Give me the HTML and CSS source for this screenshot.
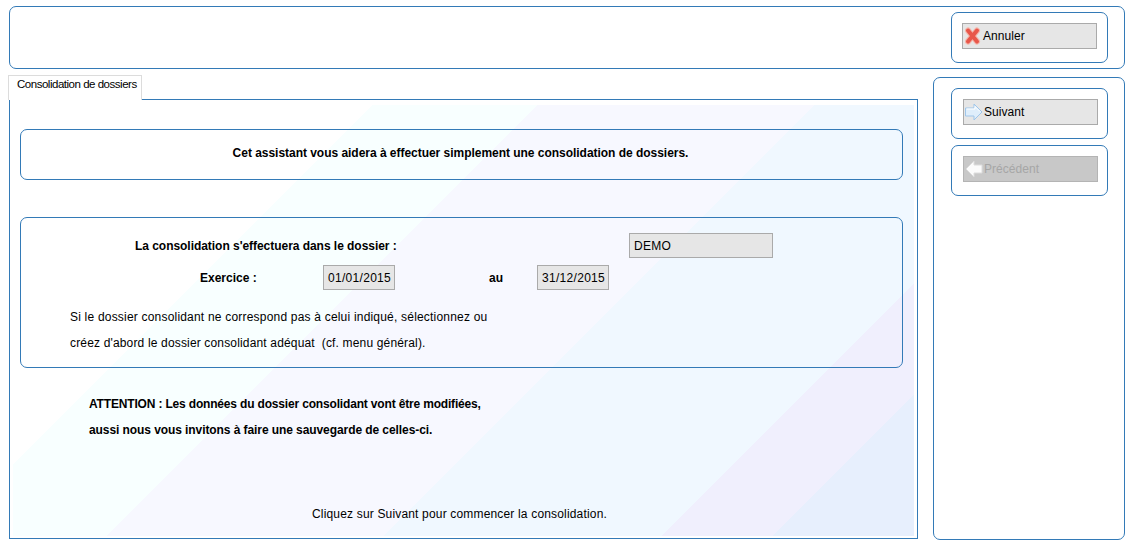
FILE: index.html
```html
<!DOCTYPE html>
<html lang="fr">
<head>
  <meta charset="UTF-8" />
  <title>Consolidation de dossiers</title>
  <link rel="stylesheet" href="styles.css">
</head>
<body>

  <div class="top-frame">
    <div class="btn-box">
      <button class="btn" type="button">
        <svg class="icon" viewBox="0 0 16 18" width="16" height="18">
          <path d="M3 3.5 L12 14.5 M12 3.5 L3 14.5" fill="none" stroke="#f4b5aa" stroke-width="6" stroke-linecap="round"/>
          <path d="M3 3.5 L12 14.5 M12 3.5 L3 14.5" fill="none" stroke="#e8574a" stroke-width="4" stroke-linecap="round"/>
        </svg>
        <span>Annuler</span>
      </button>
    </div>
  </div>

  <div class="main">
    <div class="left">
      <div class="tab">Consolidation de dossiers</div>
      <div class="panel">
        <div class="panel-bg">
          <div class="box intro">Cet assistant vous aidera à effectuer simplement une consolidation de dossiers.</div>

          <div class="box form">
            <div class="row">
              <div class="label label-dossier">La consolidation s'effectuera dans le dossier :</div>
              <div class="field field-wide">DEMO</div>
            </div>
            <div class="row row-dates">
              <div class="label label-exercice">Exercice :</div>
              <div class="field">01/01/2015</div>
              <div class="label label-au">au</div>
              <div class="field">31/12/2015</div>
            </div>
            <p class="note">Si le dossier consolidant ne correspond pas à celui indiqué, sélectionnez ou<br><span class="note-second">créez d'abord le dossier consolidant adéquat&nbsp; (cf. menu général).</span></p>
          </div>

          <p class="warning"><span class="warning-first">ATTENTION : Les données du dossier consolidant vont être modifiées,</span><br>aussi nous vous invitons à faire une sauvegarde de celles-ci.</p>

          <p class="hint">Cliquez sur Suivant pour commencer la consolidation.</p>
        </div>
      </div>
    </div>

    <div class="side">
      <div class="btn-box">
        <button class="btn" type="button">
          <svg class="icon icon-arrow" viewBox="0 0 18 18" width="18" height="18">
            <path d="M.5 5 H9 V1 L17 9 L9 17 V13 H.5 Z" fill="#dfeefb" stroke="#9fc6ea" stroke-width="1"/>
            <path d="M1.5 6 H10 V3.5 L15 8.5" fill="none" stroke="#ffffff" stroke-width="1"/>
          </svg>
          <span>Suivant</span>
        </button>
      </div>
      <div class="btn-box">
        <button class="btn btn-off" type="button">
          <svg class="icon icon-arrow" viewBox="0 0 18 18" width="18" height="18">
            <path d="M17 5 H9 V1 L1 9 L9 17 V13 H17 Z" fill="#fbfbfb" stroke="#dcdcdc" stroke-width="1"/>
          </svg>
          <span>Précédent</span>
        </button>
      </div>
    </div>
  </div>

</body>
</html>
```

FILE: styles.css
```css
body {
  font-family: 'Liberation Sans', Arial, sans-serif;
  font-size: 12px;
  margin: 0;
  padding: 0;
  background: #fff;
  color: #000;
  overflow: hidden;
}

p {
  margin: 0;
}

.top-frame {
  display: flex;
  justify-content: flex-end;
  box-sizing: border-box;
  width: 1116px;
  height: 63px;
  margin: 6px 0 0 9px;
  padding: 5px 16px 0 0;
  border: 1px solid #337ab7;
  border-radius: 7px;
}

.btn-box {
  box-sizing: border-box;
  width: 157px;
  height: 51px;
  padding: 10px 0 0 10px;
  border: 1px solid #337ab7;
  border-radius: 7px;
}

.btn {
  display: flex;
  align-items: center;
  box-sizing: border-box;
  width: 135px;
  height: 26px;
  padding: 0 0 0 2px;
  background: #e6e6e6;
  border: 1px solid #aaa;
  border-radius: 0;
  font: inherit;
  letter-spacing: 0.05px;
  color: #000;
}

.icon {
  flex: none;
  margin-right: 2px;
}

.side .btn-box {
  padding-left: 11px;
}

.side .btn {
  padding-left: 1px;
}

.icon-arrow {
  margin-right: 1px;
}

.btn-off {
  background: #c8c8c8;
  border-color: #b4b4b4;
  color: #a6a6a6;
}

.main {
  display: flex;
  margin-top: 6px;
}

.left {
  width: 910px;
  margin-left: 8px;
}

.tab {
  box-sizing: border-box;
  width: 134px;
  height: 25px;
  margin-bottom: -1px;
  position: relative;
  padding: 2px 0 0 8px;
  background: #fff;
  border: 1px solid #dcdcdc;
  border-bottom: none;
  font-size: 11.5px;
  letter-spacing: -0.48px;
  white-space: nowrap;
}

.panel {
  box-sizing: border-box;
  width: 909px;
  height: 440px;
  margin-left: 1px;
  padding: 5px 3px 2px 3px;
  border: 1px solid #337ab7;
}

.panel-bg {
  box-sizing: border-box;
  height: 100%;
  padding: 24px 11px 0 7px;
  background: linear-gradient(135deg,
    #fff 254px, #f8ffff 254px,
    #f8ffff 371px, #f7f8ff 371px,
    #f7f8ff 567px, #f0f8ff 567px,
    #f0f8ff 763px, #f0effd 763px,
    #f0effd 842px, #e7effd 842px);
}

.box {
  box-sizing: border-box;
  border: 1px solid #337ab7;
  border-radius: 7px;
}

.intro {
  height: 51px;
  padding: 16px 2px 0 0;
  font-weight: bold;
  letter-spacing: -0.03px;
  text-align: center;
}

.form {
  height: 151px;
  margin-top: 37px;
  padding-top: 15px;
}

.row {
  display: flex;
  align-items: center;
}

.row-dates {
  margin-top: 7px;
}

.label {
  font-weight: bold;
}

.label-dossier {
  width: 608px;
  padding-left: 114px;
  box-sizing: border-box;
  letter-spacing: -0.04px;
}

.label-exercice {
  width: 302px;
  padding-left: 179px;
  box-sizing: border-box;
}

.label-au {
  width: 142px;
  padding-left: 94px;
  box-sizing: border-box;
}

.field {
  box-sizing: border-box;
  width: 72px;
  height: 25px;
  padding-left: 4px;
  line-height: 25px;
  letter-spacing: 0.3px;
  background: #e6e6e6;
  border: 1px solid #aaa;
}

.field-wide {
  width: 144px;
}

.note {
  margin-top: 14px;
  padding-left: 49px;
  line-height: 26px;
  letter-spacing: 0.2px;
}

.note-second {
  letter-spacing: 0.16px;
}

.warning {
  margin-top: 23px;
  padding-left: 69px;
  font-weight: bold;
  line-height: 26px;
  letter-spacing: -0.08px;
}

.warning-first {
  letter-spacing: -0.17px;
}

.hint {
  margin-top: 58px;
  padding-left: 292px;
  line-height: 26px;
  letter-spacing: 0.17px;
}

.side {
  box-sizing: border-box;
  display: flex;
  flex-direction: column;
  gap: 6px;
  width: 192px;
  height: 463px;
  margin: 2px 0 0 15px;
  padding: 10px 0 0 17px;
  border: 1px solid #337ab7;
  border-radius: 7px;
}
```
